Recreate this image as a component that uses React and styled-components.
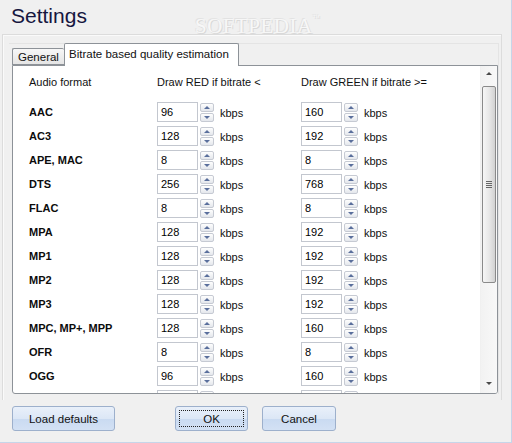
import React from 'react';
import styled, { createGlobalStyle } from 'styled-components';

const GlobalStyle = createGlobalStyle`
  html, body {
    margin: 0;
    padding: 0;
    background: #f0f0f0;
  }
  body {
    font-family: "Liberation Sans", Arial, sans-serif;
    font-size: 11px;
    color: #111;
  }
`;

const Window = styled.div`
  position: relative;
  width: 511px;
  height: 442px;
  background: #f0f0f0;
  border-right: 1px solid #c6d5e9;
  border-bottom: 1px solid #c6d5e9;
  overflow: hidden;
`;

const Title = styled.div`
  height: 34px;
  box-sizing: border-box;
  padding: 3px 0 0 11px;
  font-size: 21px;
  line-height: 26px;
  color: #16163f;
`;

const Watermark = styled.div`
  position: absolute;
  left: 195px;
  top: 14px;
  font-family: "Liberation Serif", serif;
  font-size: 21px;
  letter-spacing: 0.5px;
  color: #f7f7f7;
  text-shadow: 1px 1px 0 #d9d9d9, -1px -1px 0 #e2e2e2;
  pointer-events: none;

  sup {
    font-size: 7px;
    vertical-align: top;
  }
`;

const WatermarkUrl = styled.div`
  position: absolute;
  left: 214px;
  top: 48px;
  font-size: 10px;
  color: #dedede;
  pointer-events: none;
`;

const Frame = styled.div`
  position: relative;
  margin-left: 2px;
  width: 500px;
  height: 366px;
  box-sizing: border-box;
  border: 1px solid #dcdcdc;
  border-bottom: none;
  box-shadow: inset 1px 1px 0 #fafafa;
  padding: 8px 0 0 6px;
`;

const TabControl = styled.div`
  position: relative;
  width: 490px;
  box-shadow: inset 0 1px 0 #e4e4e4, inset -1px 0 0 #e4e4e4;
`;

const TabStrip = styled.div`
  display: flex;
  align-items: flex-end;
  height: 22px;
  padding-left: 3px;
`;

const Tab = styled.div`
  position: relative;
  z-index: ${p => (p.$active ? 2 : 1)};
  box-sizing: border-box;
  width: ${p => p.$width}px;
  height: ${p => (p.$active ? 23 : 17)}px;
  margin-bottom: ${p => (p.$active ? -1 : 0)}px;
  padding: ${p => (p.$active ? '4px 0 0 4px' : '2px 0 0 5px')};
  border: 1px solid #8d9298;
  border-bottom: ${p => (p.$active ? 'none' : '1px solid #8d9298')};
  border-right: ${p => (p.$active ? '1px solid #8d9298' : 'none')};
  border-radius: 2px 2px 0 0;
  background: ${p => (p.$active ? '#ffffff' : 'linear-gradient(#f7f7f7, #e5e5e5)')};
  font-size: 11.5px;
  white-space: nowrap;
  color: #111;
`;

const Panel = styled.div`
  position: relative;
  z-index: 1;
  display: flex;
  margin-left: 3px;
  width: 486px;
  height: 329px;
  box-sizing: border-box;
  border: 1px solid #8d9298;
  border-radius: 0 0 3px 3px;
  background: #fff;
  overflow: hidden;
`;

const Content = styled.div`
  flex: 1;
  padding: 4px 0 0 16px;
  overflow: hidden;
`;

const Columns = styled.div`
  display: grid;
  grid-template-columns: 128px 144px 1fr;
  grid-auto-rows: ${p => p.$row}px;
  align-items: ${p => (p.$head ? 'center' : 'start')};
  margin-bottom: ${p => (p.$head ? 8 : 0)}px;
`;

const HeadCell = styled.div`
  white-space: nowrap;
  color: #111;
`;

const Label = styled.div`
  height: 20px;
  line-height: 21px;
  font-weight: bold;
  white-space: nowrap;
  color: #0c0c0c;
`;

const Field = styled.div`
  display: flex;
  align-items: flex-start;
`;

const Input = styled.div`
  width: 41px;
  height: 20px;
  box-sizing: border-box;
  border: 1px solid #c3c7cf;
  background: #fff;
  padding: 0 0 0 3px;
  line-height: 18px;
  color: #000;
`;

const Spinner = styled.div`
  display: flex;
  flex-direction: column;
  gap: 1px;
  margin: 1px 0 0 2px;
`;

const SpinBtn = styled.div`
  position: relative;
  width: 14px;
  height: 9px;
  box-sizing: border-box;
  border: 1px solid #c6cad3;
  border-radius: 2px;
  background: linear-gradient(#fefefe, #e4e7ec);

  &::after {
    content: '';
    position: absolute;
    left: 3px;
    top: 2px;
    border-left: 3px solid transparent;
    border-right: 3px solid transparent;
    ${p => (p.$down ? 'border-top: 3px solid #5a6f9c;' : 'border-bottom: 3px solid #5a6f9c;')}
  }
`;

const Unit = styled.div`
  margin-left: 6px;
  height: 20px;
  line-height: 22px;
  color: #111;
`;

const Scrollbar = styled.div`
  display: flex;
  flex-direction: column;
  width: 16px;
  background: linear-gradient(90deg, #f2f2f2, #f8f8f8);
  border-left: 1px solid #f0f0f0;
`;

const ScrollArrow = styled.div`
  position: relative;
  height: 17px;

  &::after {
    content: '';
    position: absolute;
    left: 5px;
    top: 6px;
    border-left: 3px solid transparent;
    border-right: 3px solid transparent;
    ${p => (p.$down ? 'border-top: 3px solid #4a4a4a;' : 'border-bottom: 3px solid #4a4a4a;')}
  }
`;

const Track = styled.div`
  flex: 1;
  padding: 3px 1px 0 1px;
`;

const Thumb = styled.div`
  display: flex;
  align-items: center;
  justify-content: center;
  height: 197px;
  box-sizing: border-box;
  border: 1px solid #8a8a8a;
  border-radius: 2px;
  background: linear-gradient(90deg, #f6f6f6, #e8e8e8 50%, #d2d2d2);
`;

const Grip = styled.div`
  width: 6px;
  height: 7px;
  background: repeating-linear-gradient(#666 0 1px, transparent 1px 2px);
`;

const ButtonRow = styled.div`
  display: flex;
  margin-top: 6px;
  padding-left: 12px;
`;

const Button = styled.div`
  position: relative;
  width: ${p => p.$width}px;
  height: 25px;
  margin-left: ${p => p.$gap || 0}px;
  box-sizing: border-box;
  border: 1px solid #9db0cc;
  border-radius: 3px;
  background: linear-gradient(#e9f0fa 0%, #dce7f6 50%, #c9daf1 51%, #d3e1f4 100%);
  display: flex;
  align-items: center;
  justify-content: center;
  font-size: 11.5px;
  color: #111;

  ${p => p.$focused && `
    &::after {
      content: '';
      position: absolute;
      inset: 3px;
      border: 1px dotted #222;
    }
  `}
`;

const formats = [
  ['AAC', '96', '160'],
  ['AC3', '128', '192'],
  ['APE, MAC', '8', '8'],
  ['DTS', '256', '768'],
  ['FLAC', '8', '8'],
  ['MPA', '128', '192'],
  ['MP1', '128', '192'],
  ['MP2', '128', '192'],
  ['MP3', '128', '192'],
  ['MPC, MP+, MPP', '128', '160'],
  ['OFR', '8', '8'],
  ['OGG', '96', '160'],
  ['OPUS', '96', '128'],
];

const SpinField = ({ value }) => (
  <Field>
    <Input>{value}</Input>
    <Spinner>
      <SpinBtn />
      <SpinBtn $down />
    </Spinner>
    <Unit>kbps</Unit>
  </Field>
);

export default function App() {
  return (
    <>
      <GlobalStyle />
      <Window>
        <Title>Settings</Title>
        <Watermark>SOFTPEDIA<sup>™</sup></Watermark>
        <Frame>
          <WatermarkUrl>www.softpedia.com</WatermarkUrl>
          <TabControl>
            <TabStrip>
              <Tab $width={52}>General</Tab>
              <Tab $active $width={175}>Bitrate based quality estimation</Tab>
            </TabStrip>
            <Panel>
              <Content>
                <Columns $head $row={24}>
                  <HeadCell>Audio format</HeadCell>
                  <HeadCell>Draw RED if bitrate &lt;</HeadCell>
                  <HeadCell>Draw GREEN if bitrate &gt;=</HeadCell>
                </Columns>
                <Columns $row={24}>
                  {formats.map(([name, red, green]) => (
                    <React.Fragment key={name}>
                      <Label>{name}</Label>
                      <SpinField value={red} />
                      <SpinField value={green} />
                    </React.Fragment>
                  ))}
                </Columns>
              </Content>
              <Scrollbar>
                <ScrollArrow />
                <Track>
                  <Thumb>
                    <Grip />
                  </Thumb>
                </Track>
                <ScrollArrow $down />
              </Scrollbar>
            </Panel>
          </TabControl>
        </Frame>
        <ButtonRow>
          <Button $width={103}>Load defaults</Button>
          <Button $width={73} $gap={60} $focused>OK</Button>
          <Button $width={74} $gap={14}>Cancel</Button>
        </ButtonRow>
      </Window>
    </>
  );
}
